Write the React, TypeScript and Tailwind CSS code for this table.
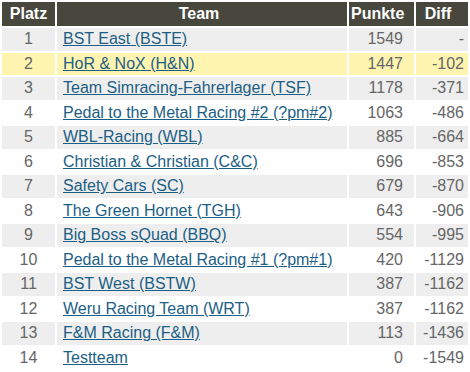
const rows = [
  { pos: 1, team: 'BST East (BSTE)', pts: 1549, diff: '-' },
  { pos: 2, team: 'HoR & NoX (H&N)', pts: 1447, diff: '-102' },
  { pos: 3, team: 'Team Simracing-Fahrerlager (TSF)', pts: 1178, diff: '-371' },
  { pos: 4, team: 'Pedal to the Metal Racing #2 (?pm#2)', pts: 1063, diff: '-486' },
  { pos: 5, team: 'WBL-Racing (WBL)', pts: 885, diff: '-664' },
  { pos: 6, team: 'Christian & Christian (C&C)', pts: 696, diff: '-853' },
  { pos: 7, team: 'Safety Cars (SC)', pts: 679, diff: '-870' },
  { pos: 8, team: 'The Green Hornet (TGH)', pts: 643, diff: '-906' },
  { pos: 9, team: 'Big Boss sQuad (BBQ)', pts: 554, diff: '-995' },
  { pos: 10, team: 'Pedal to the Metal Racing #1 (?pm#1)', pts: 420, diff: '-1129' },
  { pos: 11, team: 'BST West (BSTW)', pts: 387, diff: '-1162' },
  { pos: 12, team: 'Weru Racing Team (WRT)', pts: 387, diff: '-1162' },
  { pos: 13, team: 'F&M Racing (F&M)', pts: 113, diff: '-1436' },
  { pos: 14, team: 'Testteam', pts: 0, diff: '-1549' },
];

export default function App() {
  return (
    <div className="w-[470px] h-[372px] bg-white font-['Liberation_Sans',Arial,sans-serif] text-[16px] leading-[18px]">
      <table className="w-[470px] table-fixed border-separate border-spacing-[2px]">
        <colgroup>
          <col className="w-[53px]" />
          <col className="w-[290px]" />
          <col className="w-[65px]" />
          <col className="w-[52px]" />
        </colgroup>
        <thead>
          <tr className="h-[24px] bg-[#47473d] text-white font-bold">
            <th className="p-0 text-center">Platz</th>
            <th className="p-0 pr-[6px] text-center">Team</th>
            <th className="p-0 pl-[2px] text-left">Punkte</th>
            <th className="p-0 pr-[8px] text-center">Diff</th>
          </tr>
        </thead>
        <tbody>
          {rows.map((r) => {
            const bg = r.pos === 2 ? 'bg-[#fff5b1]' : r.pos % 2 === 1 ? 'bg-[#eeeeee]' : 'bg-white';
            return (
              <tr key={r.pos} className="h-[22.5px] text-[#666666]">
                <td className={`${bg} p-0 text-center`}>{r.pos}</td>
                <td className={`${bg} p-0 pl-[6px] whitespace-nowrap`}>
                  <a href="#" className="text-[#1c5e85] underline">{r.team}</a>
                </td>
                <td className={`${bg} p-0 pr-[11px] text-right`}>{r.pts}</td>
                <td className={`${bg} p-0 pr-[4px] text-right`}>{r.diff}</td>
              </tr>
            );
          })}
        </tbody>
      </table>
    </div>
  );
}
